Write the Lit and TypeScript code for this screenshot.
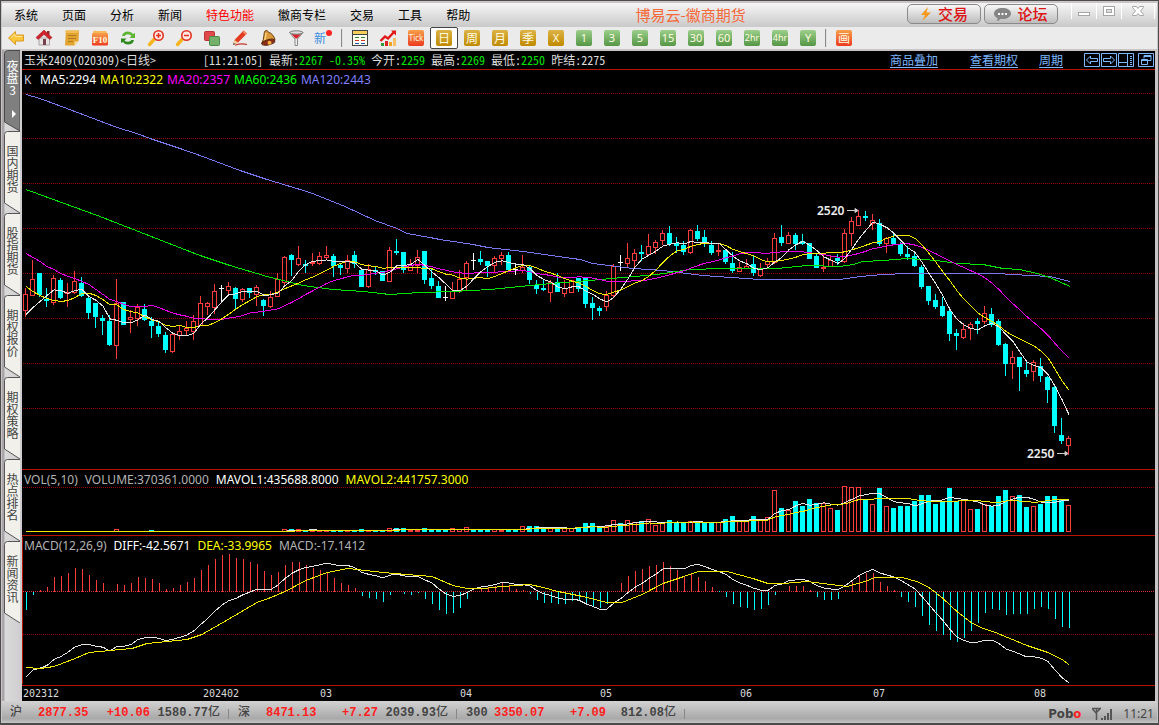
import { LitElement, html, svg, css } from "lit";
import { customElement } from "lit/decorators.js";
import { classMap } from "lit/directives/class-map.js";

type Kind = "r" | "c" | "w";
interface Candle { k: Kind; h: number; t: number; b: number; l: number; }
type Pt = [number, number];

const STEP = 7;
const X0 = 25;

/* kind, high, body top, body bottom, low in chart rows */
const CANDLES: Candle[] = `
r288,294,310,316 r260,279,295,295 c273,273,295,297 c288,299,301,307 r275,278,302,304 c278,280,298,299 r283,292,293,306 r271,281,292,293 c277,283,296,297 c295,298,313,319
c303,303,317,328 c315,318,321,335 c315,321,345,346 r279,303,345,358 c302,302,325,325 r310,317,319,332 r304,307,318,325 c304,309,320,321 c317,321,326,338 c322,326,334,337
c332,335,350,353 r332,334,351,352 r325,331,335,339 r321,328,330,334 r315,321,331,339 r296,303,325,325 r302,303,306,314 r284,291,307,313 w285,288,288,301 r282,286,290,294
c287,288,299,309 r288,289,299,301 c288,288,293,298 r285,287,294,305 c299,300,306,316 r291,297,306,307 r273,279,296,296 r256,257,282,284 c254,255,260,276 r246,258,264,265
c260,264,266,273 r253,262,263,265 r252,256,263,264 r246,255,257,258 c254,256,266,277 c263,265,268,275 r255,260,268,272 c251,255,264,268 c270,270,287,287 r264,269,286,287
c266,270,272,275 c271,271,281,281 r247,250,281,281 c239,251,253,255 c252,252,270,273 r259,265,270,270 r250,257,265,272 c251,251,280,284 c269,278,286,289 c281,286,298,298
w286,297,297,301 r282,291,298,298 r270,279,291,292 r261,263,277,289 w253,260,260,270 c251,259,262,265 c261,261,266,277 r256,258,265,272 r252,255,258,264 c252,255,270,271
w265,269,269,275 r255,267,270,272 c265,267,280,284 c280,285,289,294 c279,288,290,291 r280,282,292,301 c273,282,292,292 r280,288,293,296 r280,280,292,292 c278,278,289,292
c278,278,304,308 c297,303,308,320 c306,308,311,316 r291,295,306,310 r264,266,295,296 w255,262,262,271 r243,258,263,266 r249,253,260,266 c245,252,254,261 r234,246,254,255
r240,242,247,253 r230,233,240,244 c226,233,244,246 c237,243,246,253 c241,245,252,255 r229,230,252,253 c225,231,239,241 c230,237,242,247 c241,245,253,255 r243,250,251,255
c250,250,262,264 c252,263,271,273 r262,267,271,271 r259,266,268,268 c255,264,273,276 r263,269,275,276 r258,261,264,268 r233,238,262,263 c225,237,243,246 r232,235,243,243
c233,235,244,250 c234,241,244,245 c243,243,259,259 c254,256,268,268 r253,267,268,271 r256,260,266,266 c254,258,261,265 r229,233,261,262 r217,221,233,245 r210,216,225,225
c211,216,218,221 r214,220,223,229 c219,223,244,246 r237,238,243,252 c233,238,244,244 c242,244,254,256 c246,254,257,260 c252,256,266,267 c265,267,287,289 c286,286,301,305
c294,300,307,309 c297,306,316,317 c307,311,334,341 c329,333,336,350 r323,329,337,338 r322,324,328,339 c318,321,324,334 r306,313,321,323 c308,314,325,327 c319,321,345,346
c343,344,364,376 r351,357,363,378 c357,357,367,391 c360,370,374,377 r360,362,371,380 c358,366,376,382 c376,377,390,403 c384,387,426,433 c418,435,441,444 r436,438,445,454`
  .trim()
  .split(/\s+/)
  .map((s) => {
    const [h, t, b, l] = s.slice(1).split(",").map(Number);
    return { k: s[0] as Kind, h, t, b, l };
  });

const VOL_TOP: number[] = [
  ...Array.from({ length: 37 }, (_, i) => (i === 13 ? 529 : i === 18 ? 530 : 531)),
  529, 529, 529, 530, 530, 530, 530, 530, 530, 530, 530, 529, 530, 531, 530, 528, 528, 528, 530, 530, 528, 529, 530,
  530, 528, 529, 527, 529, 530, 529, 529, 530, 529, 530, 526, 526, 526, 529, 527, 527, 528, 528, 527,
  523, 523, 528, 526, 520, 523, 520, 522, 521, 519, 525, 523, 520, 522, 522, 521, 521, 522, 522, 522,
  519, 516, 521, 521, 516, 520, 517, 490, 508, 510, 501, 506, 499, 503, 503, 508, 510, 486, 487, 487,
  500, 504, 488, 506, 508, 506, 506, 501, 495, 495, 504, 502, 488, 501, 500, 509, 509, 504, 506, 496,
  490, 496, 495, 507, 506, 504, 496, 496, 499, 505,
];

const MACD_END: number[] = [
  610, 595, 590, 587, 577, 576, 573, 568, 569, 575, 580, 583, 592, 584, 585, 583, 577, 578, 579, 583,
  589, 588, 585, 582, 578, 570, 565, 559, 555, 554, 558, 559, 562, 564, 571, 575, 572, 565, 562, 562,
  565, 568, 570, 572, 578, 583, 585, 588, 596, 598, 599, 602, 595, 592, 594, 595, 593, 599, 604, 610,
  614, 613, 608, 599, 592, 588, 587, 586, 583, 585, 589, 590, 594, 600, 603, 603, 604, 604, 601, 600,
  604, 606, 608, 604, 592, 583, 576, 571, 569, 566, 565, 562, 566, 570, 576, 574, 577, 581, 587, 591,
  597, 604, 607, 608, 610, 609, 605, 595, 592, 586, 586, 586, 590, 597, 600, 600, 599, 590, 582, 576,
  573, 573, 582, 586, 590, 597, 602, 607, 616, 625, 631, 635, 640, 642, 638, 631, 623, 613, 609, 610,
  615, 614, 614, 614, 609, 607, 609, 619, 627, 628,
];

const DEA: Pt[] = [
  [26, 667], [40, 668], [54, 666], [62, 663], [75, 658], [89, 652], [110, 650], [132, 648], [147, 643], [167, 641],
  [187, 639], [202, 634], [223, 622], [240, 612], [257, 602], [271, 597], [285, 591], [306, 580], [327, 572],
  [348, 568], [357, 569], [383, 572], [407, 574], [432, 576], [453, 585], [467, 588], [483, 588], [502, 586],
  [530, 584], [543, 587], [558, 591], [583, 596], [607, 602], [622, 602], [642, 594], [663, 583], [684, 576],
  [698, 571], [727, 571], [753, 578], [768, 583], [783, 583], [807, 581], [847, 586], [865, 581], [875, 577],
  [902, 577], [917, 581], [929, 587], [943, 598], [957, 611], [971, 622], [983, 628], [993, 631], [1027, 645],
  [1048, 652], [1062, 659], [1069, 664],
];

const MA60: Pt[] = [
  [26, 189], [100, 216], [200, 255], [230, 265], [267, 276], [303, 285], [333, 289], [363, 291], [390, 294],
  [420, 292], [453, 291], [490, 289], [530, 285], [563, 282], [590, 280], [623, 277], [657, 274], [690, 269],
  [723, 268], [777, 268], [807, 265], [840, 266], [853, 264], [863, 261], [883, 260], [907, 258], [937, 260],
  [957, 263], [983, 264], [1003, 268], [1020, 269], [1037, 273], [1050, 277], [1070, 286],
];

const MA120: Pt[] = [
  [26, 94], [40, 98], [67, 108], [117, 127], [137, 133], [150, 138], [180, 148], [200, 155], [240, 170], [267, 179],
  [310, 192], [345, 206], [375, 220], [397, 228], [407, 233], [430, 237], [440, 239], [473, 244], [488, 247],
  [523, 251], [580, 259], [593, 263], [633, 268], [663, 270], [703, 275], [760, 279], [840, 279], [860, 276],
  [883, 274], [907, 273], [997, 273], [1030, 275], [1050, 276], [1070, 281],
];

const line = (pts: Pt[]) => pts.map(([x, y]) => `${x},${(y + 0.5).toFixed(1)}`).join(" ");

function average(values: number[], n: number, head: number[]): Pt[] {
  return values.map((_, i): Pt => {
    const x = X0 + 1 + i * STEP;
    if (i < n - 1) return [x, head[i] ?? values[0]];
    let sum = 0;
    for (let j = i - n + 1; j <= i; j++) sum += values[j];
    return [x, sum / n];
  });
}

function at(pts: Pt[], x: number): number {
  for (let i = 1; i < pts.length; i++) {
    const [xa, ya] = pts[i - 1];
    const [xb, yb] = pts[i];
    if (x <= xb) return ya + ((yb - ya) * (x - xa)) / (xb - xa);
  }
  return pts[pts.length - 1][1];
}

const closes = CANDLES.map((c) => (c.k === "c" ? c.b : c.t));
const MA5 = average(closes, 5, [314, 307, 301, 295]);
const MA10 = average(closes, 10, [286, 291, 295, 298, 300, 301, 300, 297, 293]);
const MA20 = average(closes, 20, [253, 257, 261, 266, 269, 273, 276, 278, 281, 284, 289, 294, 299, 301, 304, 306, 306, 306, 305]);
const MAVOL1 = average(VOL_TOP, 5, []);
const MAVOL2 = average(VOL_TOP, 10, []);
const DIFF: Pt[] = MACD_END.map((e, i): Pt => {
  const x = X0 + 1 + i * STEP;
  return [x, at(DEA, x) + (e - 591) / 2];
});

const grid = (y: number, bright = false) =>
  svg`<line class=${bright ? "grid bright" : "grid"} x1="23" x2="200%" y1=${y + 0.5} y2=${y + 0.5}></line>`;

@customElement("price-charts")
export class PriceCharts extends LitElement {
  static styles = css`
    :host { display: flex; flex-direction: column; flex: 1; min-width: 0; background: #000; }
    .info { display: flex; align-items: center; height: 18px; border-bottom: 1px solid #b41400; color: #dcdcdc;
      font: 12px/18px "Noto Sans Mono CJK SC", "Noto Sans CJK SC", monospace; white-space: pre; padding: 0 1px 0 2px; }
    .name { width: 179px; }
    .up { color: #00e600; }
    .links { margin-left: auto; display: flex; align-items: center; }
    .links a { color: #7db8ff; margin-right: 21px; text-underline-offset: 2px; }
    .links a:first-child { margin-right: 32px; }
    .tools { display: flex; gap: 1px; }
    .tools button { display: block; padding: 0; border: 0; background: none; width: 16px; height: 14px; }
    .tools button:last-child { margin-left: 3px; }
    .tools svg { display: block; }
    .pane { position: relative; border-bottom: 1px solid #b41400; overflow: hidden; }
    .price { flex: 1; min-height: 300px; }
    .vol { height: 65px; }
    .macd { height: 149px; }
    .axis { height: 15px; }
    .plot { display: block; width: 100%; height: 100%; overflow: hidden; }
    .pane .plot { position: absolute; inset: 0; }
    .legend { position: relative; display: flex; gap: 4px; padding: 0 2px; color: #b4b4b4;
      font: 12px/20px "Noto Sans", sans-serif; white-space: pre; }
    .vol .legend, .macd .legend { gap: 7px; }
    .k { width: 12px; color: #c8c8dc; }
    .white { color: #fff; } .yellow { color: #ff0; } .magenta { color: #f0f; } .green { color: #0f0; } .blue { color: #8080ff; }
    .grid { stroke: #900; stroke-width: 1; stroke-dasharray: 1 1; shape-rendering: crispEdges; }
    .bright { stroke: #e03030; }
    .body { shape-rendering: crispEdges; stroke-width: 1; }
    .c { fill: #0ff; } .cs { stroke: #0ff; }
    .r { fill: #000; stroke: #ff3c3c; } .rs { stroke: #ff3c3c; } .ws { stroke: #fff; }
    .ln { fill: none; stroke-width: 1; shape-rendering: crispEdges; }
    .l5 { stroke: #e4e4e4; } .l10 { stroke: #f0e800; } .l20 { stroke: #e800e8; } .l60 { stroke: #00e600; } .l120 { stroke: #7878f0; }
    .edge { stroke: #b41400; shape-rendering: crispEdges; }
    .mark { fill: #eee; font: 600 12px "Noto Sans", sans-serif; }
    .arrow { stroke: #ccc; fill: #ccc; }
    .tick { fill: #dcdcdc; font: 10px "DejaVu Sans Mono", monospace; }
  `;

  private candle(c: Candle, i: number) {
    const x = X0 + i * STEP;
    const m = x + 0.5;
    if (c.k === "c")
      return svg`<g class="body cs"><line x1=${m} x2=${m} y1=${c.h} y2=${c.l}></line></g>
        <rect class="body c" x=${x - 2} y=${c.t} width="5" height=${Math.max(1, c.b - c.t)}></rect>`;
    if (c.k === "w")
      return svg`<path class="body ws" d="M${m} ${c.h}V${c.l}M${x - 2} ${c.t + 0.5}h5"></path>`;
    return svg`<path class="body rs" d="M${m} ${c.h}V${c.t}M${m} ${c.b}V${c.l + 1}"></path>
      <rect class="body r" x=${x - 1.5} y=${c.t + 0.5} width="4" height=${Math.max(1, c.b - c.t)}></rect>`;
  }

  private volume(top: number, i: number) {
    const x = X0 + i * STEP;
    return CANDLES[i].k === "r"
      ? svg`<rect class="body r" x=${x - 1.5} y=${top + 0.5} width="4" height=${Math.max(0, 531 - top)}></rect>`
      : svg`<rect class="body c" x=${x - 2} y=${top} width="5" height=${532 - top}></rect>`;
  }

  render() {
    const ticks: [number, string][] = [
      [23, "202312"], [203, "202402"], [320, "03"], [460, "04"], [600, "05"], [740, "06"], [873, "07"], [1034, "08"],
    ];
    return html`
      <div class="info">
        <span class="name">玉米2409(020309)&lt;日线&gt;</span>
        <span>[11:21:05] 最新:<span class="up">2267 -0.35%</span> 今开:<span class="up">2259</span> 最高:<span class="up">2269</span> 最低:<span class="up">2250</span> 昨结:2275</span>
        <div class="links">
          <a href="#overlay">商品叠加</a><a href="#options">查看期权</a><a href="#period">周期</a>
          <div class="tools">
            <button aria-label="左移"><svg width="16" height="14" fill="none" stroke="#7db8ff"><path d="M.5.5h15v13H.5zM2.5 7l4-4v2.500h7v3h-7V11z"></path></svg></button>
            <button aria-label="右移"><svg width="16" height="14" fill="none" stroke="#7db8ff"><path d="M.5.5h15v13H.5zM13.500 7l-4-4v2.500h-7v3h7V11z"></path></svg></button>
            <button aria-label="侧栏"><svg width="16" height="14" fill="none" stroke="#7db8ff"><path d="M.5.5h15v13H.5zM1 9.500h8.500M9.500 1v12M12 3.500h2M12 5.500h2M12 7.500h2M12 9.500h2M12 11.500h2"></path></svg></button>
            <button aria-label="还原"><svg width="16" height="14" fill="none" stroke="#7db8ff"><path d="M.5.5h15v13H.5zM6 5.500V2.500h7v5h-3M6 3.500h7M3.500 6.500h6v5h-6zM3.500 7.500h6"></path></svg></button>
          </div>
        </div>
      </div>

      <div class="pane price">
        <svg class="plot" role="img" aria-label="K线图">
          <g transform="translate(-22 -70)">
            ${[93, 138, 183, 228, 273, 318, 363, 408].map((y) => grid(y))}
            ${CANDLES.map((c, i) => this.candle(c, i))}
            <polyline class="ln l120" points=${line(MA120)}></polyline>
            <polyline class="ln l60" points=${line(MA60)}></polyline>
            <polyline class="ln l20" points=${line(MA20)}></polyline>
            <polyline class="ln l10" points=${line(MA10)}></polyline>
            <polyline class="ln l5" points=${line(MA5)}></polyline>
            <text class="mark" x="817" y="215">2520</text>
            <path class="arrow" d="M847 210.500h9M855 208.500l3 2l-3 2z"></path>
            <text class="mark" x="1027" y="458">2250</text>
            <path class="arrow" d="M1057 453.500h9M1065 451.500l3 2l-3 2z"></path>
          </g>
        </svg>
        <div class="legend"><span class="k">K</span><span class="white">MA5:2294</span><span class="yellow">MA10:2322</span><span class="magenta">MA20:2357</span><span class="green">MA60:2436</span><span class="blue">MA120:2443</span></div>
      </div>

      <div class="pane vol">
        <svg class="plot" role="img" aria-label="成交量">
          <g transform="translate(-22 -470)">
            ${grid(487)}
            ${VOL_TOP.map((t, i) => this.volume(t, i))}
            <polyline class="ln l5" points=${line(MAVOL1)}></polyline>
            <polyline class="ln l10" points=${line(MAVOL2)}></polyline>
          </g>
        </svg>
        <div class="legend"><span>VOL(5,10)</span><span>VOLUME:370361.0000</span><span class="white">MAVOL1:435688.8000</span><span class="yellow">MAVOL2:441757.3000</span></div>
      </div>

      <div class="pane macd">
        <svg class="plot" role="img" aria-label="MACD">
          <g transform="translate(-22 -536)">
            <line class="edge" x1="22.500" x2="22.500" y1="537" y2="684"></line>
            ${grid(591, true)}${grid(634)}
            ${MACD_END.map((e, i) => {
              const x = X0 + 1.5 + i * STEP;
              return svg`<line class=${e < 591 ? "body rs" : "body cs"} x1=${x} x2=${x} y1="591.5" y2=${e}></line>`;
            })}
            <polyline class="ln l5" points=${line(DIFF)}></polyline>
            <polyline class="ln l10" points=${line(DEA)}></polyline>
          </g>
        </svg>
        <div class="legend"><span>MACD(12,26,9)</span><span class="white">DIFF:-42.5671</span><span class="yellow">DEA:-33.9965</span><span>MACD:-17.1412</span></div>
      </div>

      <div class="axis">
        <svg class="plot" role="img" aria-label="时间轴">
          ${ticks.map(([x, t]) => svg`<text class="tick" x=${x - 22} y="11">${t}</text>`)}
        </svg>
      </div>
    `;
  }
}

const tile = (cls: string, label: string, size: number) => svg`
  <rect x="0" y="0" width="16" height="16" rx="2" fill=${`url(#${cls})`}></rect>
  <text class=${label > "\u4e00" ? "tl cn" : "tl"} x="8" y=${size > 11 ? 13 : size < 10 ? 11 : 12} font-size=${size} text-anchor="middle">${label}</text>`;

const defs = svg`<defs>
  <linearGradient id="gold" x2="0" y2="1"><stop offset="0" stop-color="#dcb347"></stop><stop offset="1" stop-color="#c08a00"></stop></linearGradient>
  <linearGradient id="leaf" x2="0" y2="1"><stop offset="0" stop-color="#9ccf8a"></stop><stop offset="1" stop-color="#559645"></stop></linearGradient>
  <linearGradient id="fire" x2="0" y2="1"><stop offset="0" stop-color="#f7a04a"></stop><stop offset="1" stop-color="#ee3a20"></stop></linearGradient>
</defs>`;

const ICONS: Record<string, unknown> = {
  back: svg`<path d="M.5 8L7.500 1.500V5H15.500V11H7.500V14.500z" fill="#fcc63c" stroke="#d89a20"></path><path d="M3 7.500L7 4V6.500h7" fill="none" stroke="#ffe596"></path>`,
  home: svg`<path d="M3 8h10.500v7H3z" fill="#e9e4e2" stroke="#a9a4a4"></path><path d="M11 1h2.500v4H11z" fill="#8c2a2a"></path><path d="M8 0L16 7.500L14 9.500L8 4.500L2 9.500L0 7.500z" fill="#d0232c" stroke="#9c1822" stroke-width=".5"></path><path d="M7 9h3v6H7z" fill="#74424a"></path>`,
  note: svg`<path d="M2 .5h13L14.500 11l-4 4.500H1z" fill="#e3a32f"></path><path d="M1 2Q1 .5 2.500.5H15L14 3H2z" fill="#f0bd55"></path><path d="M4 5.500h8M4 8.500h8M4 11.500h5" stroke="#b07a20"></path><path d="M10.500 15.500v-4h4z" fill="#fbe0a0"></path>`,
  f10: svg`<path d="M1 3h14l-1-2H4L3 .5 1 1.500z" fill="#f8b85a"></path><rect x="0" y="3" width="16" height="12.500" rx="1" fill="url(#fire)"></rect><text class="tl serif" x="8" y="12.500" font-size="9" text-anchor="middle">F10</text>`,
  sync: svg`<path d="M2 6Q3 1.500 8 1.500Q11.500 1.500 13 4L15 3V8H9.500L11.500 6Q10.500 4.200 8 4.200Q5.500 4.200 4.500 6z" fill="#5cb531"></path><path d="M14 10Q13 14.500 8 14.500Q4.500 14.500 3 12L1 13V8.500H6.500L4.500 10.500Q5.500 11.800 8 11.800Q10.500 11.800 11.500 10z" fill="#2f8a1e"></path>`,
  zoomin: svg`<path d="M1.500 14.500L6 9.500" stroke="#f5b51f" stroke-width="3.400" stroke-linecap="round"></path><circle cx="10.500" cy="5.500" r="4.700" fill="#ffe9e4" stroke="#e2321f" stroke-width="1.600"></circle><path d="M8 5.500h5M10.500 3v5" stroke="#e2321f" stroke-width="1.500"></path>`,
  zoomout: svg`<path d="M1.500 14.500L6 9.500" stroke="#f5b51f" stroke-width="3.400" stroke-linecap="round"></path><circle cx="10.500" cy="5.500" r="4.700" fill="#ffe9e4" stroke="#e2321f" stroke-width="1.600"></circle><path d="M8 5.500h5" stroke="#e2321f" stroke-width="1.500"></path>`,
  layers: svg`<rect x=".5" y="1.500" width="10" height="9" rx="1" fill="#e0484a" stroke="#b83436"></rect><rect x="5.500" y="6.500" width="10" height="9" rx="1" fill="#74b06c" stroke="#4c8a49"></rect>`,
  pen: svg`<path d="M1 15l1.500-5L11.500.5L15 3.500L6 12.500z" fill="#e23b20"></path><path d="M12 .5L15 3.500L13.500 5L10.500 2z" fill="#f88a64"></path><path d="M1 15l1.500-5L6 12.500z" fill="#f2d29a"></path><path d="M1 15l.7-2 1.500 1z" fill="#333"></path><path d="M3 15.300Q9 13 15 14.500" fill="none" stroke="#c0392b" stroke-width="1.200"></path>`,
  bell: svg`<path d="M5 1Q7-.5 8.500 2Q14 4.500 15 10L1.500 14Q4 9 4 5Q4 2.500 5 1z" fill="#d99a3c" stroke="#6f3f14"></path><path d="M6 3Q5.500 8 4.500 11" stroke="#f9d27a" stroke-width="1.500" fill="none"></path><ellipse cx="8.500" cy="12.200" rx="6.500" ry="2.600" transform="rotate(-14 8.500 12.200)" fill="#8a2a18" stroke="#5a2a10"></ellipse><circle cx="9.500" cy="12.700" r="2" fill="#f3ae3c"></circle>`,
  funnel: svg`<path d="M1.500 2.500L7 9v6.500h2.500V9L15 2.500z" fill="#eee" stroke="#888"></path><path d="M3.500 4L7.500 8.500h1.500L13 4z" fill="#d8222c"></path><ellipse cx="8.300" cy="2.500" rx="6.500" ry="1.700" fill="#ddd" stroke="#777"></ellipse>`,
  fresh: svg`<text x="-2" y="13" class="xin" font-size="12">新</text><circle cx="13" cy="3" r="3" fill="#f22"></circle>`,
  sheet: svg`<rect x=".5" y=".5" width="15" height="15" fill="#fffef0" stroke="#444"></rect><rect x="1" y="1" width="14" height="3" fill="#f5cf5e"></rect><path d="M0 4.500h16" stroke="#444"></path><path d="M3 7.500h4M9 7.500h4" stroke="#2a8a3c"></path><path d="M3 10.500h4M9 10.500h4" stroke="#d33"></path><path d="M3 13.500h4M9 13.500h4" stroke="#2456b0"></path>`,
  trend: svg`<path d="M1 13h3v3H1z" fill="#2f9e3a"></path><path d="M5 11h3v5H5z" fill="#d22"></path><path d="M9 12h3v4H9z" fill="#f1a41f"></path><path d="M13 8h3v8h-3z" fill="#f5c067"></path><path d="M.5 11L5 6.500L8 8.500L14.500 1.500" fill="none" stroke="#e01818" stroke-width="2.400"></path><path d="M11 .5h5v5z" fill="#e01818"></path>`,
};

const LEFT_TOOLS: [string, string][] = [
  ["back", "后退"], ["home", "首页"], ["note", "公告"], ["f10", "F10资料"], ["sync", "刷新"], ["zoomin", "放大"],
  ["zoomout", "缩小"], ["layers", "叠加"], ["pen", "画线"], ["bell", "预警"], ["funnel", "筛选"], ["fresh", "新功能"],
];

const PERIODS: [string, string, number][] = [
  ["fire", "Tick", 8], ["gold", "日", 12], ["gold", "周", 12], ["gold", "月", 12], ["gold", "季", 12],
  ["gold", "X", 11], ["leaf", "1", 11], ["leaf", "3", 11], ["leaf", "5", 11], ["leaf", "15", 11],
  ["leaf", "30", 11], ["leaf", "60", 11], ["leaf", "2hr", 9], ["leaf", "4hr", 9], ["leaf", "Y", 11],
];

@customElement("app-root")
export class AppRoot extends LitElement {
  static styles = css`
    :host { display: flex; flex-direction: column; box-sizing: border-box; min-height: 100vh; background: #c9c5c6;
      border: solid #4b4b4b; border-width: 1px 1px 2px 1px; padding: 2px 1px 0;
      font-family: "Noto Sans CJK SC", sans-serif; font-size: 12px; color: #000; }
    button { font: inherit; color: inherit; padding: 0; border: 0; background: none; cursor: pointer; }
    .titlebar { display: grid; grid-template-columns: auto 1fr auto; height: 24px; background: linear-gradient(#f6f6f6, #c9c9c9); }
    .menu { display: flex; align-items: center; gap: 24px; padding-left: 12px; }
    .menu button { line-height: 24px; white-space: nowrap; }
    .menu .hot { color: #f00; }
    .brand { align-self: center; margin: 0; padding-left: 4px; text-align: center; white-space: nowrap; font-size: 15px; line-height: 24px; font-weight: 400; color: #f4693a; }
    .right { display: flex; justify-content: flex-end; }
    .pill { display: flex; align-items: center; justify-content: center; gap: 6px; box-sizing: border-box; width: 74px; height: 20px;
      margin: 1px 3px 0 0; border: 1px solid #8a8a8a; border-radius: 5px; background: linear-gradient(#f7f7f7, #bdbdbd);
      color: #dc1414; font-size: 15px; line-height: 18px; font-weight: 500; }
    .wins { display: flex; margin-left: 10px; }
    .wins button { width: 25px; height: 16px; border-left: 1px solid #fff; }
    .wins button:last-child { width: 34px; border-right: 1px solid #fff; margin-right: 2px; }
    .wins svg { display: block; margin: 0 auto; }
    .toolbar { display: flex; align-items: center; height: 22px; background: #ebebeb; }
    .toolbar button { box-sizing: border-box; width: 28px; height: 22px; display: flex; align-items: center; justify-content: center; }
    .toolbar svg { display: block; overflow: visible; }
    .toolbar .on { border: 1px solid #444; border-radius: 2px; background: #fff; }
    .sep { width: 2px; height: 18px; margin: 0 3px; background: #8a8a8a; box-sizing: border-box; border-right: 1px solid #e0e0e0; }
    .tl { fill: #fffbe0; font-family: "Noto Sans", sans-serif; }
    .cn { font-family: "Noto Sans CJK SC", sans-serif; }
    .serif { font-family: "Liberation Serif", serif; font-weight: 700; }
    .xin { fill: #3d8edd; font-family: "Noto Sans CJK SC", sans-serif; }
    .body { display: flex; flex: 1; padding: 1px 2px 0 0; }
    .side { width: 20px; background: linear-gradient(90deg, #a9a5a9 2px, #dadada 3px, #cfcccf); }
    .tabs { display: flex; flex-direction: column; width: 16px; margin-left: 2px; }
    .tab { position: relative; width: 16px; height: 82px; color: #444; display: flex; padding: 14px 0 0 2px; box-sizing: border-box; }
    .tab svg { position: absolute; left: 0; top: 0; }
    .tab .word { position: relative; width: 13px; line-height: 12px; word-break: break-all; text-align: center; }
    .tab.on { height: 81px; color: #fff; padding-top: 10px; }
    price-charts { margin-top: 1px; }
    .status { display: flex; align-items: center; box-sizing: border-box; height: 22px; padding: 3px 0 0 8px; color: #444;
      background: linear-gradient(#d2d2d2, #a9a9a9 80%, #c4c4c4);
      font: 700 12px/19px "Liberation Mono", "Noto Sans CJK SC", monospace; white-space: nowrap; }
    .status .cjk { font-weight: 500; }
    .idx { width: 28px; }
    .val { width: 51px; color: #ff2020; }
    .chg { width: 61px; text-align: right; color: #ff2020; }
    .amt { width: 70px; text-align: right; }
    .bar { width: 1px; height: 10px; margin: 0 9px 0 8px; background: #888; }
    .end { margin-left: auto; display: flex; align-items: center; gap: 10px; padding-right: 3px; }
    .logo { font: 700 13px/19px "DejaVu Sans Condensed", "Liberation Sans", sans-serif; }
    .logo b { color: #ff2020; }
    .time { font: 12px/19px "Noto Sans", sans-serif; }
  `;

  private tool(icon: unknown, label: string, on = false) {
    return html`<button class=${classMap({ on })} aria-label=${label}><svg width="16" height="16" viewBox="0 0 16 16">${defs}${icon}</svg></button>`;
  }

  private tab(word: string, on = false) {
    return html`<button class=${classMap({ tab: true, on })}>
      <svg width="16" height="82">
        ${on
          ? svg`<path d="M.5 72V3.500Q.5.500 3.500.500H16V81L.5 72z" fill="#7f7f7f" stroke="#4a4a4a"></path><path d="M8 60l4 4-4 4z" fill="#fff"></path>`
          : svg`<path d="M16 .5H3.500Q.5.500.5 3.500V72L16 82" fill="#f1f0ea" stroke="#555"></path>`}
      </svg>
      <span class="word">${word}</span></button>`;
  }

  render() {
    const menu = ["系统", "页面", "分析", "新闻", "特色功能", "徽商专栏", "交易", "工具", "帮助"];
    const quotes = [
      ["沪", "2877.35", "+10.06", "1580.77"],
      ["深", "8471.13", "+7.27", "2039.93"],
      ["300", "3350.07", "+7.09", "812.08"],
    ];
    return html`
      <header class="titlebar">
        <nav class="menu">${menu.map((m) => html`<button class=${classMap({ hot: m === "特色功能" })}>${m}</button>`)}</nav>
        <h1 class="brand">博易云-徽商期货</h1>
        <div class="right">
          <button class="pill"><svg width="12" height="14"><path d="M8 0L1 8h4L2.500 14L11 5.500H6.500z" fill="#f39a1e"></path></svg>交易</button>
          <button class="pill"><svg width="17" height="14"><path d="M8.500 1C13 1 17 3 17 6.500S13 12 8.500 12Q7.500 12 6.500 11.800Q5 14 2.500 14Q4 12.500 3.500 11Q0 9.500 0 6.500C0 3 4 1 8.500 1z" fill="#858585"></path><path d="M4 6h2v2H4zM7.500 6h2v2h-2zM11 6h2v2h-2z" fill="#fff"></path></svg>论坛</button>
          <div class="wins">
            <button aria-label="最小化"><svg width="14" height="12"><rect x="1.500" y="7.500" width="11" height="3" fill="#fff" stroke="#a5a5a5"></rect></svg></button>
            <button aria-label="最大化"><svg width="14" height="12"><rect x="1.500" y="1.500" width="11" height="9" fill="#fff" stroke="#a5a5a5"></rect><rect x="4.500" y="4.500" width="5" height="3" fill="#ddd" stroke="#a5a5a5"></rect></svg></button>
            <button aria-label="关闭"><svg width="14" height="12"><path d="M1.500 1.500h4L7 3.500l1.500-2h4v1L9.500 6l3 3.500v1h-4L7 8.500l-1.500 2h-4v-1L4.500 6l-3-3.500z" fill="#fff" stroke="#a5a5a5"></path></svg></button>
          </div>
        </div>
      </header>
      <div class="toolbar" role="toolbar">
        ${LEFT_TOOLS.map(([k, l]) => this.tool(ICONS[k], l))}
        <span class="sep"></span>
        ${this.tool(ICONS.sheet, "报价")}${this.tool(ICONS.trend, "走势")}
        ${PERIODS.map(([c, t, s]) => this.tool(tile(c, t, s), t, t === "日"))}
        <span class="sep"></span>
        ${this.tool(tile("fire", "画", 12), "画线")}
      </div>
      <main class="body">
        <aside class="side">
          <div class="tabs">
            ${this.tab("夜盘3", true)}
            ${["国内期货", "股指期货", "期权报价", "期权策略", "热点排名", "新闻资讯"].map((t) => this.tab(t))}
          </div>
        </aside>
        <price-charts></price-charts>
      </main>
      <footer class="status">
        ${quotes.map(
          ([n, v, c, a]) => html`<span class="idx ${n === "300" ? "" : "cjk"}">${n}</span><span class="val">${v}</span><span class="chg">${c}</span><span class="amt">${a}<span class="cjk">亿</span></span><span class="bar"></span>`,
        )}
        <div class="end">
          <span class="logo">Pob<b>o</b></span>
          <svg width="22" height="13"><path d="M1 1.500h9M1.500 2L5 6l4-4M5.500 2v11" stroke="#555" stroke-width="1.500" fill="none"></path><path d="M10 11h2v2h-2zM13 9h2v4h-2zM16 6h2v7h-2zM19 2h2v11h-2z" fill="#555"></path></svg>
          <span class="time">11:21</span>
        </div>
      </footer>
    `;
  }
}
